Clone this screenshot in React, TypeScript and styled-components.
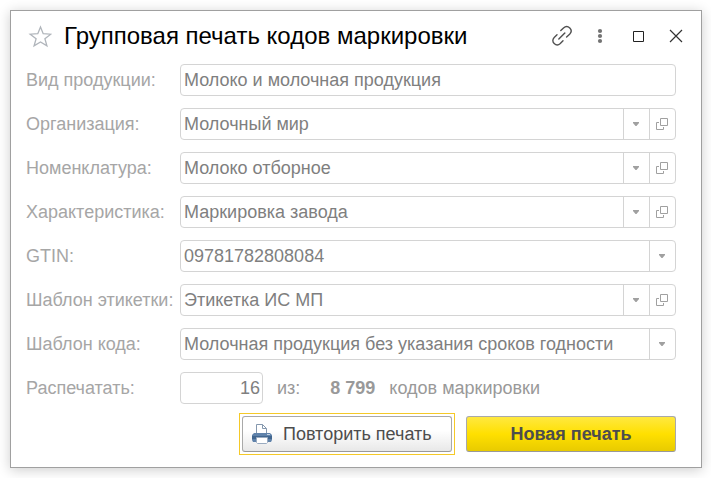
import React from "react";
import styled, { createGlobalStyle, css } from "styled-components";

const GlobalStyle = createGlobalStyle`
  *, *::before, *::after { box-sizing: border-box; }
  body {
    margin: 0;
    background: #fff;
    font-family: "Liberation Sans", Arial, sans-serif;
    font-size: 18px;
    line-height: 20px;
    color: #999;
  }
  button, input { font: inherit; margin: 0; }
`;

const Page = styled.div`
  padding: 10px 9px 10px 10px;
`;

const Dialog = styled.main`
  border: 1px solid #a0a0a0;
  background: #fff;
  box-shadow: 0 2px 12px rgba(0, 0, 0, 0.2);
`;

const TitleBar = styled.header`
  display: flex;
  align-items: center;
  height: 53px;
  padding: 0 13px 3px 17px;
`;

const Title = styled.h1`
  flex: 1;
  margin: 0 0 0 12px;
  font-size: 24px;
  line-height: 28px;
  font-weight: 400;
  color: #000;
  white-space: nowrap;
`;

const WindowTools = styled.div`
  display: flex;
  gap: 14px;
`;

const IconButton = styled.button`
  display: flex;
  align-items: center;
  justify-content: center;
  width: 24px;
  height: 24px;
  padding: 0;
  border: 0;
  background: none;
`;

const Form = styled.form`
  display: grid;
  gap: 12px;
  padding: 0 25px 15px 15px;
`;

const Row = styled.div`
  display: grid;
  grid-template-columns: 154px minmax(0, 1fr);
  align-items: center;
`;

const Label = styled.label`
  color: #a6a6a6;
  white-space: nowrap;
`;

const fieldFrame = css`
  height: 32px;
  border: 1px solid #d4d4d4;
  border-radius: 4px;
  background: #fff;
`;

const FieldBox = styled.div`
  ${fieldFrame}
  display: flex;
  overflow: hidden;
`;

const FieldInput = styled.input`
  flex: 1;
  min-width: 0;
  padding: 0 3px;
  border: 0;
  outline: 0;
  background: none;
  color: #7f7f7f;
`;

const FieldButton = styled.button`
  display: flex;
  align-items: center;
  justify-content: center;
  width: 26px;
  padding: 0 1px 0 0;
  border: 0;
  border-left: 1px solid #d4d4d4;
  background: none;
`;

const CountLine = styled.div`
  display: flex;
  align-items: center;
  gap: 14px;
  white-space: nowrap;
`;

const CountInput = styled.input`
  ${fieldFrame}
  width: 83px;
  padding: 0 2px;
  outline: 0;
  text-align: right;
  color: #7f7f7f;
`;

const Total = styled.strong`
  margin-left: 16px;
`;

const Actions = styled.div`
  display: flex;
  justify-content: flex-end;
  align-items: center;
  gap: 14px;
`;

const ActionButton = styled.button<{ $primary?: boolean }>`
  position: relative;
  display: flex;
  align-items: center;
  justify-content: ${(p) => (p.$primary ? "center" : "flex-start")};
  gap: 10px;
  width: 210px;
  height: 36px;
  padding: 0 8px;
  border: 1px solid #a9a9a9;
  border-bottom-color: #999;
  border-radius: 3px;
  color: #4d4d4d;
  white-space: nowrap;
  ${(p) =>
    p.$primary
      ? css`
          font-weight: 700;
          background: linear-gradient(#ffe840, #ffe000 50%, #e8cb00);
        `
      : css`
          background: linear-gradient(#fff, #fff 40%, #e8e8e8);
          &::after {
            content: "";
            position: absolute;
            inset: -4px;
            border: 1px solid #f5c928;
            pointer-events: none;
          }
        `}
`;

const StarIcon = () => (
  <svg width="24" height="24" viewBox="0 0 24 24" fill="none" stroke="#b0b5bb" strokeWidth="1.3" aria-hidden="true">
    <path d="M12.5 3 15.2 9.7 22.8 10.2 16.9 14.8 18.9 21.9 12.5 17.9 6.1 21.9 8.1 14.8 2.2 10.2 9.8 9.7Z" />
  </svg>
);

const LinkIcon = () => (
  <svg width="24" height="24" viewBox="0 0 24 24" fill="none" stroke="#505050" strokeWidth="1.4" strokeLinecap="round" aria-hidden="true">
    <path d="M10.8 6.6 13.5 4C15.4 2.2 18 2.2 19.8 4S21.4 8.400 19.600 10.200L16.600 13" />
    <path d="M13 16.800 10.300 19.600C8.400 21.400 6 21.400 4.200 19.600S2.400 15.200 4.200 13.400L7 10.700" />
    <path d="M8.800 15 14.800 9" />
  </svg>
);

const DotsIcon = () => (
  <svg width="24" height="24" viewBox="0 0 24 24" fill="#737373" aria-hidden="true">
    <circle cx="12" cy="7" r="2.1" />
    <circle cx="12" cy="12" r="2.1" />
    <circle cx="12" cy="17" r="2.1" />
  </svg>
);

const MaximizeIcon = () => (
  <svg width="24" height="24" viewBox="0 0 24 24" fill="none" stroke="#222" aria-hidden="true">
    <path d="M7.5 7.5h10v10h-10z" />
  </svg>
);

const CloseIcon = () => (
  <svg width="24" height="24" viewBox="0 0 24 24" fill="none" stroke="#333" strokeWidth="1.2" aria-hidden="true">
    <path d="M6 6 18 18M18 6 6 18" />
  </svg>
);

const ArrowIcon = () => (
  <svg width="8" height="4" viewBox="0 0 8 4" fill="#a0a0a0" aria-hidden="true">
    <path d="M1 0h6v1L4.5 4h-1L1 1z" />
  </svg>
);

const OpenIcon = () => (
  <svg width="12" height="12" viewBox="0 0 12 12" fill="none" stroke="#a0a0a0" aria-hidden="true">
    <path d="M4.5.5h7v7h-7zM3 4.5H.5v7h7V9" />
  </svg>
);

const PrinterIcon = () => (
  <svg width="22" height="20" viewBox="0 0 22 20" aria-hidden="true">
    <path d="M5.5 10V.5h6l4 4V10" fill="#fff" stroke="#8598ae" />
    <path d="M11.5.5v4h4" fill="none" stroke="#8598ae" />
    <path d="M3 9h16l2 2v5l-1 2H2l-1-2v-5z" fill="#5f82aa" />
    <path d="M1 12h20v3H1z" fill="#41668f" />
    <path d="M16 10h3v1h-3z" fill="#c3d1e0" />
    <path d="M5.5 13.5h11v5l-1 1h-9l-1-1z" fill="#fff" stroke="#9aabc0" />
  </svg>
);

type FieldSpec = { id: string; label: string; value: string; list?: boolean; open?: boolean };

const fields: FieldSpec[] = [
  { id: "kind", label: "Вид продукции:", value: "Молоко и молочная продукция" },
  { id: "company", label: "Организация:", value: "Молочный мир", list: true, open: true },
  { id: "item", label: "Номенклатура:", value: "Молоко отборное", list: true, open: true },
  { id: "feature", label: "Характеристика:", value: "Маркировка завода", list: true, open: true },
  { id: "gtin", label: "GTIN:", value: "09781782808084", list: true },
  { id: "labelTemplate", label: "Шаблон этикетки:", value: "Этикетка ИС МП", list: true, open: true },
  { id: "codeTemplate", label: "Шаблон кода:", value: "Молочная продукция без указания сроков годности", list: true },
];

const Field = ({ id, label, value, list, open }: FieldSpec) => (
  <Row>
    <Label htmlFor={id}>{label}</Label>
    <FieldBox>
      <FieldInput id={id} type="text" defaultValue={value} />
      {list && (
        <FieldButton type="button" aria-label="Выбрать из списка">
          <ArrowIcon />
        </FieldButton>
      )}
      {open && (
        <FieldButton type="button" aria-label="Открыть">
          <OpenIcon />
        </FieldButton>
      )}
    </FieldBox>
  </Row>
);

export default function App() {
  return (
    <Page>
      <GlobalStyle />
      <Dialog>
        <TitleBar>
          <IconButton type="button" aria-label="Добавить в избранное">
            <StarIcon />
          </IconButton>
          <Title>Групповая печать кодов маркировки</Title>
          <WindowTools>
            <IconButton type="button" aria-label="Получить ссылку">
              <LinkIcon />
            </IconButton>
            <IconButton type="button" aria-label="Ещё">
              <DotsIcon />
            </IconButton>
            <IconButton type="button" aria-label="Развернуть">
              <MaximizeIcon />
            </IconButton>
            <IconButton type="button" aria-label="Закрыть">
              <CloseIcon />
            </IconButton>
          </WindowTools>
        </TitleBar>
        <Form onSubmit={(e) => e.preventDefault()}>
          {fields.map((f) => (
            <Field key={f.id} {...f} />
          ))}
          <Row>
            <Label htmlFor="count">Распечатать:</Label>
            <CountLine>
              <CountInput id="count" type="text" inputMode="numeric" defaultValue="16" />
              <span>из:</span>
              <Total>8 799</Total>
              <span>кодов маркировки</span>
            </CountLine>
          </Row>
          <Actions>
            <ActionButton type="button">
              <PrinterIcon />
              Повторить печать
            </ActionButton>
            <ActionButton type="submit" $primary>
              Новая печать
            </ActionButton>
          </Actions>
        </Form>
      </Dialog>
    </Page>
  );
}
